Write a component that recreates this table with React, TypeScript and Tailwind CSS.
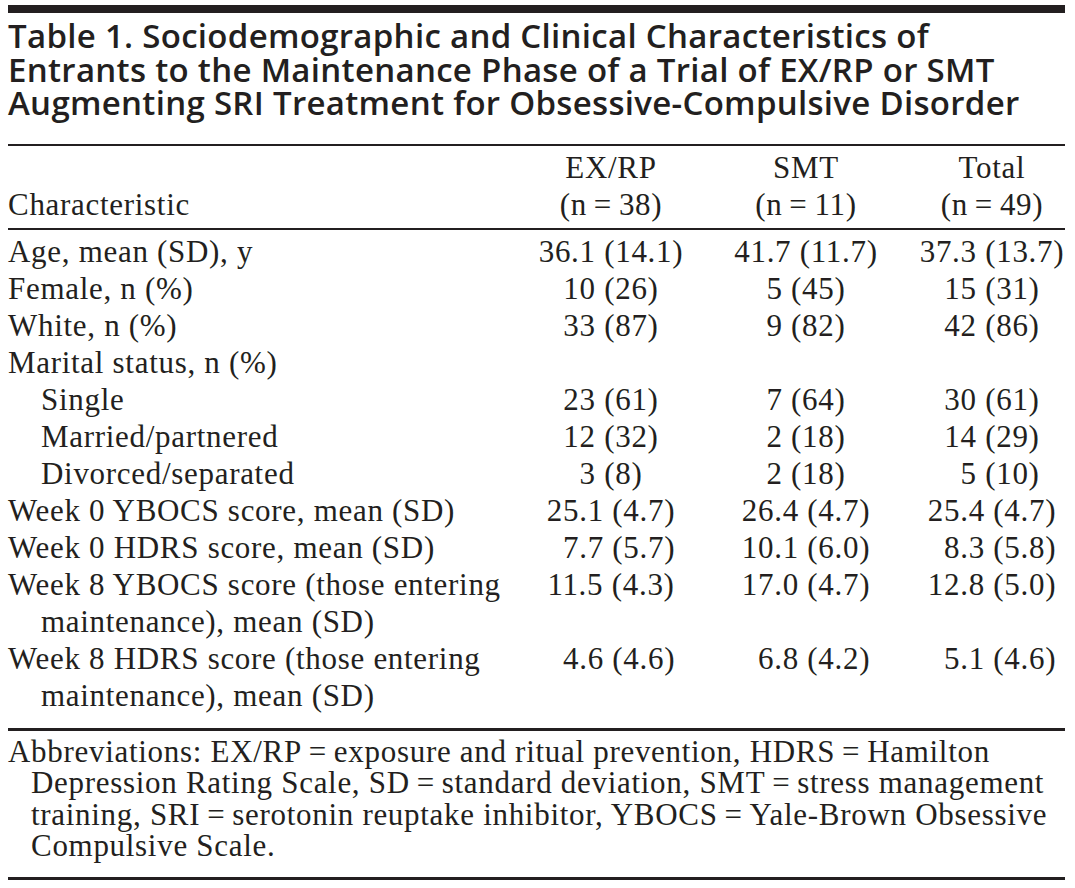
import React from "react";

type Row = { label: string[]; indent?: boolean; values?: string[] };

// "_" at the start of a value = pad one invisible digit so the figures line up on the paren
const rows: Row[] = [
  { label: ["Age, mean (SD), y"], values: ["36.1 (14.1)", "41.7 (11.7)", "37.3 (13.7)"] },
  { label: ["Female, n (%)"], values: ["10 (26)", "5 (45)", "15 (31)"] },
  { label: ["White, n (%)"], values: ["33 (87)", "9 (82)", "42 (86)"] },
  { label: ["Marital status, n (%)"] },
  { label: ["Single"], indent: true, values: ["23 (61)", "7 (64)", "30 (61)"] },
  { label: ["Married/partnered"], indent: true, values: ["12 (32)", "2 (18)", "14 (29)"] },
  { label: ["Divorced/separated"], indent: true, values: ["3 (8)", "2 (18)", "_5 (10)"] },
  { label: ["Week 0 YBOCS score, mean (SD)"], values: ["25.1 (4.7)", "26.4 (4.7)", "25.4 (4.7)"] },
  { label: ["Week 0 HDRS score, mean (SD)"], values: ["_7.7 (5.7)", "10.1 (6.0)", "_8.3 (5.8)"] },
  {
    label: ["Week 8 YBOCS score (those entering", "maintenance), mean (SD)"],
    values: ["11.5 (4.3)", "17.0 (4.7)", "12.8 (5.0)"],
  },
  {
    label: ["Week 8 HDRS score (those entering", "maintenance), mean (SD)"],
    values: ["_4.6 (4.6)", "_6.8 (4.2)", "_5.1 (4.6)"],
  },
];

const Cell = ({ value }: { value: string }) => {
  const pad = value.startsWith("_");
  return (
    <div className="flex justify-center whitespace-nowrap">
      {pad && <span className="invisible">0</span>}
      {pad ? value.slice(1) : value}
    </div>
  );
};

const grid = "grid grid-cols-[1fr_164px_226px_146px]";
const eq = "\u2009=\u2009";

export default function App() {
  return (
    <div className="min-h-[888px] w-[1075px] bg-white pt-[5px] text-[#231f20]">
      <div className="ml-[8px] w-[1057px]">
        <div className="h-[8px] bg-[#231f20]" />

        <h1
          className="mt-[6px] text-[33px] font-semibold leading-[33.5px] tracking-[0.3px]"
          style={{ fontFamily: '"Open Sans", "Noto Sans", sans-serif' }}
        >
          Table 1. Sociodemographic and Clinical Characteristics of
          <br />
          Entrants to the Maintenance Phase of a Trial of EX/RP or SMT
          <br />
          Augmenting SRI Treatment for Obsessive-Compulsive Disorder
        </h1>

        <div className="mt-[24px] h-[2px] bg-[#231f20]" />

        <div
          className="text-[31px] leading-[37px] tracking-[0.7px]"
          style={{ fontFamily: '"Liberation Serif", "Times New Roman", serif' }}
        >
          <div className={`${grid} pt-[3px] pb-[5px]`}>
            <div className="self-end">Characteristic</div>
            <div className="text-center">
              EX/RP
              <br />
              (n{eq}38)
            </div>
            <div className="text-center">
              SMT
              <br />
              (n{eq}11)
            </div>
            <div className="text-center">
              Total
              <br />
              (n{eq}49)
            </div>
          </div>

          <div className="h-[2px] bg-[#231f20]" />

          <div className="pt-[3px] pb-[14px]">
            {rows.map((row, i) => (
              <div key={i} className={grid}>
                <div className={row.indent ? "pl-[33px]" : ""}>
                  {row.label.map((line, j) => (
                    <div key={j} className={j > 0 ? "pl-[33px]" : ""}>
                      {line}
                    </div>
                  ))}
                </div>
                {row.values ? (
                  row.values.map((v, k) => <Cell key={k} value={v} />)
                ) : (
                  <>
                    <div />
                    <div />
                    <div />
                  </>
                )}
              </div>
            ))}
          </div>

          <div className="h-[3px] bg-[#231f20]" />

          <div className="pt-[5px] pb-[15px] leading-[31.5px]">
            <div>Abbreviations: EX/RP{eq}exposure and ritual prevention, HDRS{eq}Hamilton</div>
            <div className="pl-[23px]">
              Depression Rating Scale, SD{eq}standard deviation, SMT{eq}stress management
            </div>
            <div className="pl-[23px]">
              training, SRI{eq}serotonin reuptake inhibitor, YBOCS{eq}Yale-Brown Obsessive
            </div>
            <div className="pl-[23px]">Compulsive Scale.</div>
          </div>

          <div className="h-[3px] bg-[#231f20]" />
        </div>
      </div>
    </div>
  );
}
